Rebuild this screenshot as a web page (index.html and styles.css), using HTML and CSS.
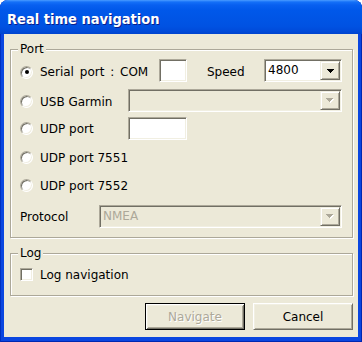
FILE: index.html
```html
<!DOCTYPE html>
<html>
<head>
<meta charset="utf-8">
<link rel="stylesheet" href="styles.css">
</head>
<body>
<div class="window">
  <div class="titlebar"><span class="title">Real time navigation</span></div>
  <div class="client">
    <div class="group port">
      <span class="group-title">Port</span>
      <div class="row r1">
        <span class="radio checked"></span>
        <span class="label w-serial">Serial port : COM</span>
        <span class="edit w-com top"></span>
        <span class="speed">Speed</span>
        <span class="combo w-speed top"><span class="value">4800</span><span class="dropbtn"><svg width="7" height="4" viewBox="0 0 7 4" shape-rendering="crispEdges"><path d="M0 0h7v1h-1v1h-1v1h-1v1h-1v-1h-1v-1h-1v-1h-1z" fill="#000"/></svg></span></span>
      </div>
      <div class="row r2">
        <span class="radio"></span>
        <span class="label w-mid">USB Garmin</span>
        <span class="combo disabled grow top"><span class="value"></span><span class="dropbtn"><svg width="8" height="5" viewBox="0 0 8 5" shape-rendering="crispEdges"><path d="M1 1h7v1h-1v1h-1v1h-1v1h-1v-1h-1v-1h-1v-1h-1z" fill="#fff"/><path d="M0 0h7v1h-1v1h-1v1h-1v1h-1v-1h-1v-1h-1v-1h-1z" fill="#ACA899"/></svg></span></span>
      </div>
      <div class="row r3">
        <span class="radio"></span>
        <span class="label w-mid">UDP port</span>
        <span class="edit w-udp"></span>
      </div>
      <div class="row r4">
        <span class="radio"></span>
        <span class="label">UDP port 7551</span>
      </div>
      <div class="row r5">
        <span class="radio"></span>
        <span class="label">UDP port 7552</span>
      </div>
      <div class="row r6">
        <span class="label w-proto">Protocol</span>
        <span class="combo disabled grow"><span class="value">NMEA</span><span class="dropbtn"><svg width="8" height="5" viewBox="0 0 8 5" shape-rendering="crispEdges"><path d="M1 1h7v1h-1v1h-1v1h-1v1h-1v-1h-1v-1h-1v-1h-1z" fill="#fff"/><path d="M0 0h7v1h-1v1h-1v1h-1v1h-1v-1h-1v-1h-1v-1h-1z" fill="#ACA899"/></svg></span></span>
      </div>
    </div>
    <div class="group log">
      <span class="group-title">Log</span>
      <div class="row r-log">
        <span class="check"></span>
        <span class="label">Log navigation</span>
      </div>
    </div>
    <div class="buttons">
      <span class="btn default disabled">Navigate</span>
      <span class="btn">Cancel</span>
    </div>
  </div>
</div>
</body>
</html>
```

FILE: styles.css
```css
html, body {
  margin: 0;
  padding: 0;
}
body {
  width: 362px;
  height: 342px;
  overflow: hidden;
  background: #ffffff;
  font-family: "DejaVu Sans", Verdana, sans-serif;
  font-size: 12px;
  color: #000;
}
.window {
  width: 362px;
  height: 342px;
  display: flex;
  flex-direction: column;
  background: #0A46E0;
  border-radius: 8px 8px 0 0;
  box-shadow: inset 1px 0 0 #0030C0, inset -1px 0 0 #0028B0, inset 0 -1px 0 #0028B0;
}
.titlebar {
  flex: none;
  height: 34px;
  box-sizing: border-box;
  display: flex;
  align-items: center;
  padding: 4px 0 0 7px;
  border-radius: 8px 8px 0 0;
  background: linear-gradient(to bottom, #4A9CFF 0px, #1470F8 2px, #0860F0 5px, #0058EA 10px, #0055E6 18px, #0052E2 26px, #004BDA 31px, #0044CE 34px);
}
.title {
  font-family: "DejaVu Sans Condensed", "DejaVu Sans", sans-serif;
  font-weight: bold;
  font-size: 14.5px;
  color: #fff;
  text-shadow: 1px 1px 0 #0A1E8C;
  white-space: nowrap;
}
.client {
  flex: 1;
  margin: 0 4px 5px 4px;
  background: #ECE9D8;
  display: flex;
  flex-direction: column;
}
.group {
  margin: 15px 5px 0 6px;
  padding: 0 10px 9px 9px;
  border: 1px solid #ACA899;
  box-shadow: inset 1px 1px 0 #fff, 1px 1px 0 #fff;
  display: flex;
  flex-direction: column;
}
.group-title {
  align-self: flex-start;
  margin: -8px 0 0 -2px;
  padding: 0 2px;
  line-height: 14px;
  background: #ECE9D8;
}
.row {
  display: flex;
  align-items: center;
  height: 23px;
}
.row .top { align-self: flex-start; }
.r1 { margin-top: 3px; height: 26px; }
.r2 { margin-top: 4px; height: 25px; }
.r3 { margin-top: 3px; }
.r4 { margin-top: 6px; }
.r5 { margin-top: 5px; }
.r6 { margin-top: 8px; }
.r-log { margin-top: 3px; }

.label { white-space: nowrap; }
.w-serial { width: 119px; flex: none; word-spacing: 2px; }
.w-mid { width: 88px; flex: none; }
.w-proto { width: 79px; flex: none; }
.speed { margin-left: 20px; }

.radio {
  flex: none;
  width: 11px;
  height: 11px;
  margin-right: 7px;
  border-radius: 50%;
  background: #fff;
  border: 1px solid;
  border-color: #ACA899 #fff #fff #ACA899;
  box-shadow: inset 1px 1px 0 #716F64, inset -1px -1px 0 #F1EFE2;
  display: flex;
  align-items: center;
  justify-content: center;
}
.radio.checked::after {
  content: "";
  width: 4px;
  height: 4px;
  border-radius: 50%;
  background: #000;
}
.check {
  flex: none;
  width: 11px;
  height: 11px;
  margin-right: 7px;
  background: #fff;
  border: 1px solid;
  border-color: #ACA899 #fff #fff #ACA899;
  box-shadow: inset 1px 1px 0 #716F64, inset -1px -1px 0 #F1EFE2;
}
.edit, .combo {
  flex: none;
  box-sizing: border-box;
  height: 23px;
  border: 1px solid;
  border-color: #ACA899 #fff #fff #ACA899;
  box-shadow: inset 1px 1px 0 #716F64, inset -1px -1px 0 #F1EFE2;
  background: #fff;
}
.w-com { width: 28px; }
.w-udp { width: 59px; }
.combo {
  display: flex;
  align-items: center;
}
.w-speed { width: 78px; margin-left: auto; }
.combo.grow { flex: 1; }
.combo.disabled { background: #ECE9D8; color: #ACA899; }
.combo .value {
  flex: 1;
  padding-left: 3px;
  line-height: 19px;
}
.dropbtn {
  flex: none;
  box-sizing: border-box;
  width: 20px;
  height: 19px;
  margin: 1px;
  background: #ECE9D8;
  border: 1px solid;
  border-color: #F1EFE2 #716F64 #716F64 #F1EFE2;
  box-shadow: inset 1px 1px 0 #fff, inset -1px -1px 0 #ACA899;
  display: flex;
  align-items: center;
  justify-content: center;
}
.dropbtn svg { display: block; }
.buttons {
  display: flex;
  justify-content: flex-end;
  gap: 8px;
  margin: 7px 5px 0 0;
}
.btn {
  box-sizing: border-box;
  width: 100px;
  height: 27px;
  display: flex;
  align-items: center;
  justify-content: center;
  background: #ECE9D8;
  border: 1px solid;
  border-color: #fff #716F64 #716F64 #fff;
  box-shadow: inset 1px 1px 0 #F1EFE2, inset -1px -1px 0 #ACA899;
}
.btn.default {
  border-color: #000;
  box-shadow: inset 1px 1px 0 #fff, inset -1px -1px 0 #716F64, inset 2px 2px 0 #F1EFE2, inset -2px -2px 0 #ACA899;
}
.btn.disabled {
  color: #ACA899;
  text-shadow: 1px 1px 0 #fff;
}
```
